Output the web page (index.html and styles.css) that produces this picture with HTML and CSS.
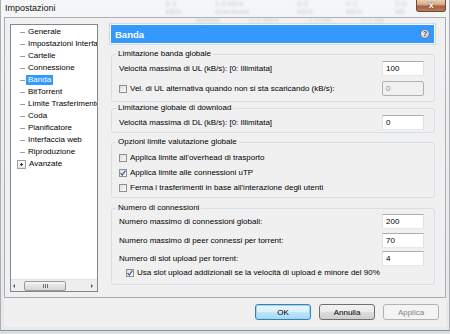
FILE: index.html
```html
<!DOCTYPE html>
<html>
<head>
    <link rel="stylesheet" href="styles.css">
</head>
<body>
    <div id="window">
        <div id="titlebar">
            <span class="title">Impostazioni</span>
            <div class="behind">
                <div class="behind-line">
                    <span>0.1 kB/s</span><span>1.0 kB/s download</span><span>0.0 kB/s</span><span>0.0 kB/s</span><span>0.0 kB</span>
                </div>
                <div class="behind-line second">
                    <span>upload</span><span>0.0 kB/s</span><span>1.0 kB</span><span>0.0 kB</span>
                </div>
            </div>
            <div id="closeBtn">x</div>
        </div>

        <div id="client">
            <div id="frame">
                <div id="tree">
                    <ul>
                        <li><span>Generale</span></li>
                        <li><span>Impostazioni Interfaccia</span></li>
                        <li><span>Cartelle</span></li>
                        <li><span>Connessione</span></li>
                        <li class="selected"><span>Banda</span></li>
                        <li><span>BitTorrent</span></li>
                        <li><span>Limite Trasferimento</span></li>
                        <li><span>Coda</span></li>
                        <li><span>Pianificatore</span></li>
                        <li><span>Interfaccia web</span></li>
                        <li><span>Riproduzione</span></li>
                        <li class="expand"><span>Avanzate</span></li>
                    </ul>
                    <div class="hscroll">
                        <span class="arrow-left"></span>
                        <span class="thumb"><span class="grip"></span></span>
                        <span class="arrow-right"></span>
                    </div>
                </div>

                <div id="page">
                    <div class="page-head">
                        <div class="bar">
                            <span>Banda</span>
                            <span class="help">?</span>
                        </div>
                    </div>

                    <fieldset class="group g1">
                        <legend>Limitazione banda globale</legend>
                        <div class="row first">
                            <label>Velocità massima di UL (kB/s): [0: Illimitata]</label>
                            <input type="text" value="100">
                        </div>
                        <div class="row gap5">
                            <label><span class="box"></span>Vel. di UL alternativa quando non si sta scaricando (kB/s):</label>
                            <input type="text" value="0" class="disabled" disabled>
                        </div>
                    </fieldset>

                    <fieldset class="group g2">
                        <legend>Limitazione globale di download</legend>
                        <div class="row first">
                            <label>Velocità massima di DL (kB/s): [0: Illimitata]</label>
                            <input type="text" value="0">
                        </div>
                    </fieldset>

                    <fieldset class="group g3">
                        <legend>Opzioni limite valutazione globale</legend>
                        <div class="check-row first3"><span class="box"></span>Applica limite all'overhead di trasporto</div>
                        <div class="check-row"><span class="box"><svg width="6" height="6" viewBox="0 0 6 6"><path d="M0.6 3.2 L2.3 5 L5.4 0.6" stroke="#3c5793" stroke-width="1.2" fill="none"/></svg></span>Applica limite alle connessioni uTP</div>
                        <div class="check-row"><span class="box"></span>Ferma i trasferimenti in base all'interazione degli utenti</div>
                    </fieldset>

                    <fieldset class="group g4">
                        <legend>Numero di connessioni</legend>
                        <div class="row first1">
                            <label>Numero massimo di connessioni globali:</label>
                            <input type="text" value="200">
                        </div>
                        <div class="row gap4">
                            <label>Numero massimo di peer connessi per torrent:</label>
                            <input type="text" value="70">
                        </div>
                        <div class="row gap3">
                            <label>Numero di slot upload per torrent:</label>
                            <input type="text" value="4">
                        </div>
                        <div class="check-row indent"><span class="box"><svg width="6" height="6" viewBox="0 0 6 6"><path d="M0.6 3.2 L2.3 5 L5.4 0.6" stroke="#3c5793" stroke-width="1.2" fill="none"/></svg></span>Usa slot upload addizionali se la velocità di upload è minore del 90%</div>
                    </fieldset>
                </div>
            </div>

            <div id="buttons">
                <button class="btn default">OK</button>
                <button class="btn">Annulla</button>
                <button class="btn off">Applica</button>
            </div>
        </div>
    </div>
</body>
</html>
```

FILE: styles.css
```css
* {
    box-sizing: border-box;
}

html, body {
    margin: 0;
    padding: 0;
    width: 450px;
    height: 334px;
    overflow: hidden;
    font-family: "Liberation Sans", Arial, sans-serif;
    font-size: 8px;
    color: #000;
    background-color: #dcdfe2;
}

#window {
    width: 450px;
    height: 331px;
    background: linear-gradient(to bottom, #f5f6f7, #eceef0 40%, #e6e8eb);
    border-left: 1px solid #a9aeb3;
    border-right: 1px solid #a9aeb3;
    border-bottom: 1px solid #8d9296;
}

#titlebar {
    height: 17px;
    display: flex;
    align-items: flex-start;
}

#titlebar .title {
    font-size: 9px;
    line-height: 16px;
    padding-left: 4px;
    color: #111;
    text-shadow: 0 0 4px #fff;
}

.behind {
    margin-left: 110px;
    color: #cdd0d3;
    filter: blur(0.8px);
    font-size: 8px;
    line-height: 8px;
}

.behind-line {
    display: flex;
    gap: 22px;
}

.behind-line.second {
    margin-left: 30px;
    gap: 30px;
}

#closeBtn {
    margin-left: auto;
    margin-right: 3px;
    width: 31px;
    height: 12px;
    border: 1px solid #6b4a3a;
    border-top: none;
    border-radius: 0 0 3px 3px;
    background: linear-gradient(to bottom, #e9cfb9, #d1a684 45%, #a2603e 55%, #bb7c58);
    color: #fff;
    font-weight: bold;
    font-size: 9px;
    line-height: 10px;
    text-align: center;
    text-shadow: 0 0 2px #4a2a1a;
}

#client {
    margin-left: 3px;
    width: 442px;
    height: 310px;
    background-color: #f0f0f0;
}

#frame {
    height: 281px;
    border: 1px solid #a9afb5;
    display: flex;
    align-items: flex-start;
}

/* tree */

#tree {
    margin-left: 5px;
    margin-top: 6px;
    width: 88px;
    height: 268px;
    border: 1px solid #828790;
    background-color: #fff;
    display: flex;
    flex-direction: column;
    overflow: hidden;
}

#tree ul {
    list-style: none;
    margin: 0;
    padding: 1px 0 0 0;
}

#tree li {
    height: 12px;
    display: flex;
    align-items: center;
    padding-left: 9px;
    white-space: nowrap;
}

#tree li::before {
    content: '';
    width: 5px;
    margin-right: 1px;
    border-top: 1px solid #9c9c9c;
    flex: none;
}

#tree li span {
    padding: 0 2px;
    line-height: 10px;
}

#tree li.selected span {
    background-color: #3399ff;
    color: #fff;
}

#tree li.expand::before {
    width: 7px;
    height: 7px;
    margin-left: -3px;
    margin-right: 1px;
    border: 1px solid #a0a0a0;
    background: linear-gradient(#333, #333) center / 3px 1px no-repeat,
                linear-gradient(#333, #333) center / 1px 3px no-repeat,
                linear-gradient(to bottom, #fff, #e6e6e6);
}

.hscroll {
    margin-top: auto;
    height: 12px;
    display: flex;
    align-items: center;
    padding: 0 4px 0 2px;
    background-color: #eeeeee;
    border-top: 1px solid #e2e2e2;
}

.arrow-left {
    width: 0;
    height: 0;
    border-top: 2px solid transparent;
    border-bottom: 2px solid transparent;
    border-right: 2px solid #555;
}

.arrow-right {
    margin-left: auto;
    width: 0;
    height: 0;
    border-top: 2px solid transparent;
    border-bottom: 2px solid transparent;
    border-left: 2px solid #555;
}

.thumb {
    margin-left: 9px;
    width: 42px;
    height: 10px;
    border: 1px solid #9a9a9a;
    border-radius: 2px;
    background: linear-gradient(to bottom, #f6f6f6, #e2e2e2 50%, #d6d6d6);
    display: flex;
    align-items: center;
    justify-content: center;
}

.grip {
    width: 5px;
    height: 4px;
    background: repeating-linear-gradient(90deg, #6f6f6f 0 1px, transparent 1px 2px);
}

/* page */

#page {
    margin-left: 11px;
    margin-top: 5px;
    width: 327px;
}

.page-head {
    height: 22px;
    border: 1px solid #d3d9df;
    padding: 1px;
    background-color: #f7f7f7;
}

.bar {
    height: 18px;
    background-color: #3399ff;
    color: #fff;
    font-weight: bold;
    font-size: 9.5px;
    display: flex;
    align-items: center;
    justify-content: space-between;
    padding: 0 4px 0 4px;
}

.help {
    width: 10px;
    height: 10px;
    border-radius: 50%;
    border: 1px solid #6b7b95;
    background: radial-gradient(circle at 35% 30%, #ffffff, #c7cfdb 60%, #8e9bb0);
    color: #2e3f60;
    font-size: 7px;
    line-height: 8px;
    text-align: center;
}

.group {
    margin: 4px 0 0 2px;
    width: 324px;
    min-inline-size: 0;
    border: 1px solid #d5dfe5;
    border-radius: 3px;
    padding: 0 10px 0 7px;
}

.group legend {
    padding: 0 2px;
    margin-left: -3px;
    line-height: 10px;
    color: #000;
}

.g1 { padding-bottom: 5px; }
.g2 { margin-top: 1px; padding-bottom: 2px; }
.g3 { margin-top: 4px; padding-bottom: 2px; }
.g4 { margin-top: 5px; padding-bottom: 5px; }

.row {
    height: 15px;
    display: flex;
    align-items: center;
    justify-content: space-between;
}

.row label {
    display: flex;
    align-items: center;
    white-space: nowrap;
}

.row.first { margin-top: 2px; }
.row.first1 { margin-top: 1px; }
.row.gap5 { margin-top: 5px; }
.row.gap4 { margin-top: 4px; }
.row.gap3 { margin-top: 3px; }

.row input {
    width: 42px;
    height: 15px;
    margin: 0;
    padding: 0 0 0 3px;
    font-family: "Liberation Sans", Arial, sans-serif;
    font-size: 8px;
    color: #000;
    background-color: #fff;
    border: 1px solid;
    border-color: #abadb3 #dbdfe6 #e3e9ef #e2e3ea;
    outline: none;
}

.row input.disabled {
    background-color: #f0f0f0;
    border-color: #adb2b5;
    border-radius: 2px;
    color: #8d8d8d;
}

.check-row {
    height: 15px;
    display: flex;
    align-items: center;
    white-space: nowrap;
}

.check-row.first3 { margin-top: 3px; }

.check-row.indent {
    height: 13px;
    padding-left: 7px;
}

.box {
    width: 8px;
    height: 8px;
    flex: none;
    margin-right: 3px;
    border: 1px solid #8e8f8f;
    background: linear-gradient(135deg, #dcdcdc, #fbfbfb);
    display: flex;
    align-items: center;
    justify-content: center;
}

/* buttons */

#buttons {
    display: flex;
    justify-content: flex-end;
    gap: 8px;
    padding: 6px 7px 0 0;
}

.btn {
    width: 56px;
    height: 16px;
    margin: 0;
    padding: 0;
    font-family: "Liberation Sans", Arial, sans-serif;
    font-size: 8px;
    color: #000;
    border: 1px solid #707070;
    border-radius: 3px;
    background: linear-gradient(to bottom, #f2f2f2, #ebebeb 50%, #dddddd 51%, #cfcfcf);
}

.btn.default {
    border-color: #3c7fb1;
    background: linear-gradient(to bottom, #eaf6fd, #d9f0fc 50%, #bee6fd 51%, #a7d9f5);
    box-shadow: inset 0 0 0 1px #9ed7f5;
}

.btn.off {
    border-color: #adb2b5;
    background: #f4f4f4;
    color: #838383;
}
```
